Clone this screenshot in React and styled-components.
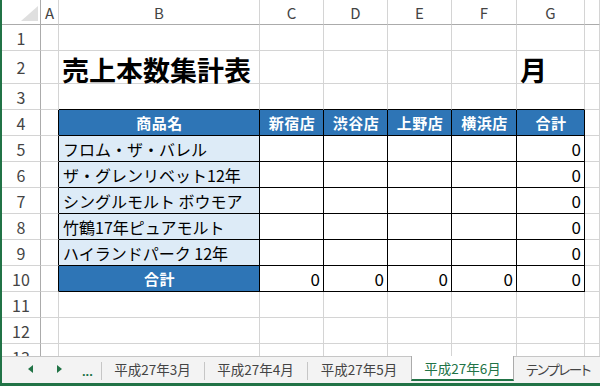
import React from "react";
import styled, { createGlobalStyle } from "styled-components";

const GlobalStyle = createGlobalStyle`
  html, body {
    margin: 0;
    padding: 0;
    background: #ffffff;
    overflow: hidden;
  }
  body {
    font-family: "Noto Sans CJK JP", "Noto Sans", sans-serif;
  }
`;

const GREEN = "#217346";
const GRID = "#d4d4d4";
const HEAD_LINE = "#ababab";
const BLACK = "#000000";
const BLUE = "#2e75b6";
const PALE = "#ddebf7";

const Window = styled.div`
  width: 600px;
  height: 386px;
  box-sizing: border-box;
  border-left: 2px solid ${GREEN};
  display: flex;
  flex-direction: column;
  background: #ffffff;
  overflow: hidden;
`;

const Sheet = styled.div`
  height: 356px;
  flex: none;
  overflow: hidden;
  display: grid;
  grid-template-columns: 39px 18px 201px 64px 64px 64px 65px 68px 1fr;
  grid-template-rows: 25px 26px 33px repeat(11, 26px);
`;

const Corner = styled.div`
  box-sizing: border-box;
  border-right: 1px solid ${HEAD_LINE};
  border-bottom: 1px solid ${HEAD_LINE};
  display: flex;
  align-items: flex-end;
  justify-content: flex-end;
  padding: 0 2px 3px 0;
`;

const ColHead = styled.div`
  box-sizing: border-box;
  border-right: 1px solid ${GRID};
  border-bottom: 1px solid ${HEAD_LINE};
  display: flex;
  align-items: center;
  justify-content: center;
  font-size: 15px;
  color: #444444;
  padding-top: 1px;
`;

const RowHead = styled.div`
  box-sizing: border-box;
  border-right: 1px solid ${HEAD_LINE};
  border-bottom: 1px solid ${GRID};
  display: flex;
  align-items: center;
  justify-content: center;
  font-size: 16px;
  color: #444444;
`;

const Cell = styled.div`
  box-sizing: border-box;
  border-right: 1px solid ${(p) => p.$right};
  border-bottom: 1px solid ${(p) => p.$bottom};
  background: ${(p) => p.$bg};
  display: flex;
  align-items: ${(p) => (p.$title ? "flex-end" : "center")};
  justify-content: ${(p) =>
    p.$align === "center" ? "center" : p.$align === "right" ? "flex-end" : "flex-start"};
  padding: ${(p) => (p.$title ? "0 0 0 3px" : "0 3px 0 4px")};
  font-size: ${(p) => (p.$title ? "27px" : p.$head ? "15px" : p.$num ? "17px" : "16px")};
  font-weight: ${(p) => (p.$title || p.$head ? 700 : 400)};
  letter-spacing: ${(p) => (p.$head ? "0.5px" : "0")};
  color: ${(p) => (p.$head ? "#ffffff" : "#000000")};
  line-height: 1;
  white-space: nowrap;
  overflow: visible;
`;

const TabBar = styled.div`
  height: 27px;
  flex: none;
  display: flex;
  align-items: flex-start;
  background: #f3f3f3;
`;

const Nav = styled.div`
  width: 99px;
  height: 25px;
  flex: none;
  box-sizing: border-box;
  border-top: 1px solid #c6c6c6;
  display: flex;
  align-items: center;
  padding-left: 26px;
  color: ${GREEN};
`;

const NavArrow = styled.svg`
  width: 5px;
  height: 8px;
  margin-right: ${(p) => p.$gap}px;
  flex: none;
`;

const More = styled.span`
  font-family: "Liberation Sans", sans-serif;
  font-weight: 700;
  font-size: 13px;
  margin-top: 5px;
`;

const Tab = styled.div`
  position: relative;
  width: ${(p) => p.$w}px;
  height: 25px;
  flex: none;
  box-sizing: border-box;
  display: flex;
  align-items: center;
  justify-content: ${(p) => (p.$prop ? "flex-start" : "center")};
  padding-left: ${(p) => (p.$prop ? "12px" : "0")};
  font-size: 13.5px;
  font-feature-settings: ${(p) => (p.$prop ? '"palt"' : "normal")};
  letter-spacing: ${(p) => (p.$prop ? "-1.3px" : "0")};
  color: ${(p) => (p.$active ? GREEN : "#444444")};
  background: ${(p) => (p.$active ? "#ffffff" : "transparent")};
  border-top: ${(p) => (p.$active ? "none" : "1px solid #c6c6c6")};
  border-left: ${(p) => (p.$active ? `1px solid ${HEAD_LINE}` : "none")};
  border-right: ${(p) => (p.$active ? `1px solid ${HEAD_LINE}` : "none")};
  border-bottom: ${(p) => (p.$active ? `2px solid ${GREEN}` : "none")};
  padding-top: ${(p) => (p.$active ? "1px" : "0")};
  white-space: nowrap;

  &::before {
    content: "";
    display: ${(p) => (p.$sep ? "block" : "none")};
    position: absolute;
    left: 0;
    top: 5px;
    height: 18px;
    border-left: 1px solid #c6c6c6;
  }
`;

const Filler = styled.div`
  flex: 1;
  height: 25px;
  border-top: 1px solid #c6c6c6;
`;

const StatusLine = styled.div`
  height: 3px;
  flex: none;
  background: ${GREEN};
`;

const COLS = ["A", "B", "C", "D", "E", "F", "G", ""];

const products = [
  "フロム・ザ・バレル",
  "ザ・グレンリベット12年",
  "シングルモルト ボウモア",
  "竹鶴17年ピュアモルト",
  "ハイランドパーク 12年",
];

const headers = ["商品名", "新宿店", "渋谷店", "上野店", "横浜店", "合計"];

const cellFor = (r, c) => {
  const inTable = r >= 4 && r <= 10 && c >= 1 && c <= 6;
  let right = GRID;
  let bottom = GRID;
  if (inTable) {
    right = BLACK;
    bottom = BLACK;
  }
  if (c === 0 && r >= 4 && r <= 10) right = BLACK;
  if (r === 3 && c >= 1 && c <= 6) bottom = BLACK;

  let bg = "#ffffff";
  let text = null;
  let align = "left";
  let head = false;
  let title = false;

  if (r === 2 && c === 1) {
    text = "売上本数集計表";
    title = true;
  }
  if (r === 2 && c === 6) {
    text = "月";
    title = true;
  }
  if (r === 4 && inTable) {
    bg = BLUE;
    head = true;
    align = "center";
    text = headers[c - 1];
  }
  if (r >= 5 && r <= 9) {
    if (c === 1) {
      bg = PALE;
      text = products[r - 5];
    }
    if (c === 6) {
      text = "0";
      align = "right";
    }
  }
  if (r === 10) {
    if (c === 1) {
      bg = BLUE;
      head = true;
      align = "center";
      text = "合計";
    } else if (inTable) {
      text = "0";
      align = "right";
    }
  }
  return { right, bottom, bg, text, align, head, title, num: text === "0" };
};

const App = () => {
  const rows = Array.from({ length: 13 }, (_, i) => i + 1);
  return (
    <>
      <GlobalStyle />
      <Window>
        <Sheet>
          <Corner>
            <svg width="17" height="15" viewBox="0 0 17 15">
              <polygon points="17,0 17,15 0,15" fill="#dfdfdf" />
            </svg>
          </Corner>
          {COLS.map((l, i) => (
            <ColHead key={`h${i}`}>{l}</ColHead>
          ))}
          {rows.map((r) => (
            <React.Fragment key={r}>
              <RowHead>{r}</RowHead>
              {COLS.map((_, c) => {
                const s = cellFor(r, c);
                return (
                  <Cell
                    key={c}
                    $right={s.right}
                    $bottom={s.bottom}
                    $bg={s.bg}
                    $align={s.align}
                    $head={s.head}
                    $title={s.title}
                    $num={s.num}
                  >
                    {s.text}
                  </Cell>
                );
              })}
            </React.Fragment>
          ))}
        </Sheet>
        <TabBar>
          <Nav>
            <NavArrow $gap={24} viewBox="0 0 5 8">
              <polygon points="5,0 5,8 0,4" fill={GREEN} />
            </NavArrow>
            <NavArrow $gap={20} viewBox="0 0 5 8">
              <polygon points="0,0 0,8 5,4" fill={GREEN} />
            </NavArrow>
            <More>...</More>
          </Nav>
          <Tab $w={103} $sep>平成27年3月</Tab>
          <Tab $w={103} $sep>平成27年4月</Tab>
          <Tab $w={104} $sep>平成27年5月</Tab>
          <Tab $w={103} $active>平成27年6月</Tab>
          <Tab $w={87} $prop>テンプレート</Tab>
          <Filler />
        </TabBar>
        <StatusLine />
      </Window>
    </>
  );
};

export default App;
